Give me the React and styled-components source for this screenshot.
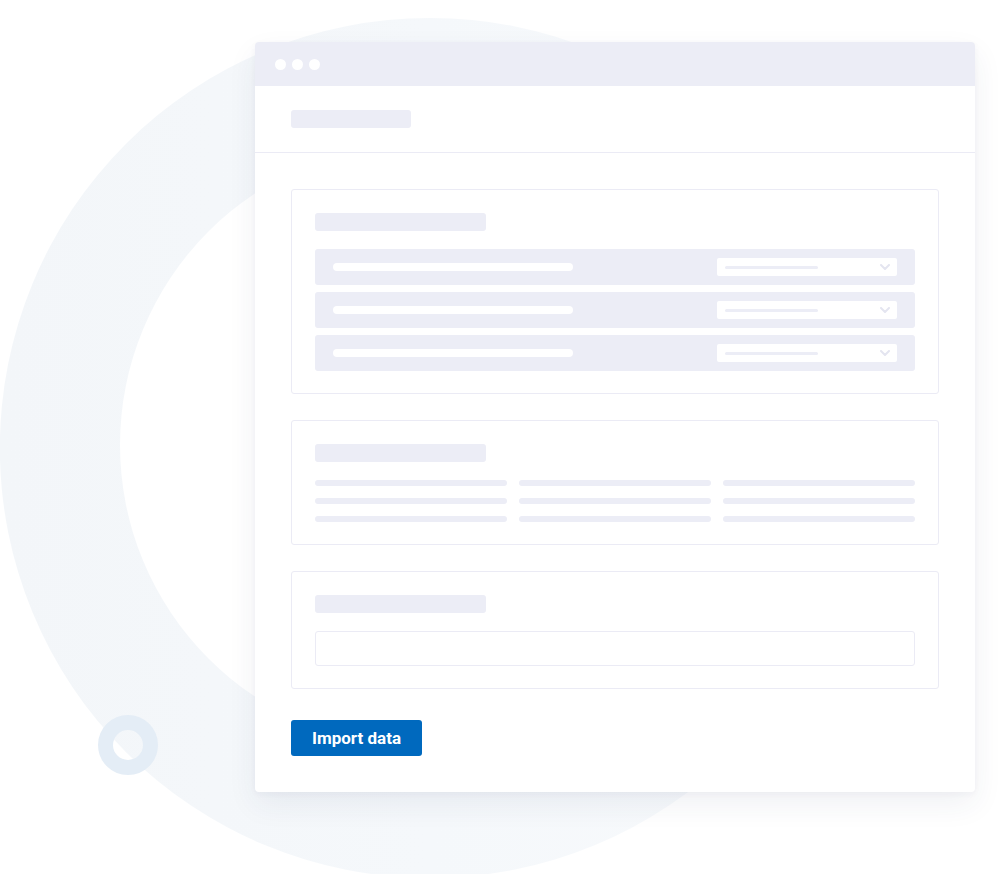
import React from "react";
import styled, { createGlobalStyle } from "styled-components";

const Global = createGlobalStyle`
  html, body { margin: 0; padding: 0; background: #ffffff; }
  body { font-family: Roboto, "Liberation Sans", sans-serif; }
  * { box-sizing: border-box; }
`;

const SKEL = "#ecedf6";
const LINE = "#ebebf5";

const Stage = styled.div`
  position: relative;
  width: 999px;
  height: 874px;
  overflow: hidden;
  padding: 42px 0 0 255px;
`;

const Backdrop = styled.svg`
  position: absolute;
  left: 0;
  top: 0;
  width: 999px;
  height: 874px;
  pointer-events: none;
`;

const Window = styled.div`
  position: relative;
  width: 720px;
  height: 750px;
  background: #ffffff;
  border-radius: 4px;
  box-shadow: 0 12px 30px rgba(40, 60, 100, 0.07), 0 2px 6px rgba(40, 60, 100, 0.04);
  display: flex;
  flex-direction: column;
`;

const TitleBar = styled.div`
  height: 44px;
  background: ${SKEL};
  border-radius: 4px 4px 0 0;
  display: flex;
  align-items: center;
  gap: 6px;
  padding-left: 20px;
`;

const Dot = styled.span`
  width: 11px;
  height: 11px;
  border-radius: 50%;
  background: #ffffff;
`;

const Header = styled.div`
  height: 67px;
  display: flex;
  align-items: center;
  padding: 0 36px;
  border-bottom: 1px solid ${LINE};
`;

const Skel = styled.div`
  width: ${(p) => p.$w}px;
  height: ${(p) => p.$h}px;
  background: ${(p) => p.$c || SKEL};
  border-radius: ${(p) => p.$r ?? 3}px;
  flex: none;
`;

const Body = styled.div`
  padding: 36px 36px 0 36px;
  display: flex;
  flex-direction: column;
  gap: 26px;
`;

const Card = styled.div`
  border: 1px solid ${LINE};
  border-radius: 3px;
  padding: 23px 23px 22px 23px;
  display: flex;
  flex-direction: column;
  gap: 18px;
`;

const Rows = styled.div`
  display: flex;
  flex-direction: column;
  gap: 7px;
`;

const Row = styled.div`
  height: 36px;
  background: ${SKEL};
  border-radius: 3px;
  display: flex;
  align-items: center;
  justify-content: space-between;
  padding: 0 18px;
`;

const Select = styled.div`
  width: 180px;
  height: 18px;
  background: #ffffff;
  border-radius: 2px;
  display: flex;
  align-items: center;
  justify-content: space-between;
  padding: 0 7px 0 8px;
`;

const Grid = styled.div`
  display: grid;
  grid-template-columns: repeat(3, 1fr);
  column-gap: 12px;
  row-gap: 12px;
`;

const GridLine = styled.div`
  height: 6px;
  background: ${SKEL};
  border-radius: 3px;
`;

const Input = styled.div`
  height: 35px;
  border: 1px solid ${LINE};
  border-radius: 3px;
`;

const Actions = styled.div`
  padding: 31px 36px 0 36px;
`;

const Button = styled.button`
  width: 131px;
  height: 36px;
  border: none;
  border-radius: 3px;
  background: #0069be;
  color: #ffffff;
  font-family: Roboto, "Liberation Sans", sans-serif;
  font-weight: 700;
  font-size: 17px;
  cursor: pointer;
  padding: 0;
`;

const Chevron = () => (
  <svg width="10" height="6" viewBox="0 0 10 6">
    <path d="M1 1 L5 5 L9 1" fill="none" stroke="#e4e5f0" strokeWidth="2" strokeLinecap="round" strokeLinejoin="round" />
  </svg>
);

const SelectRow = () => (
  <Row>
    <Skel $w={240} $h={8} $c="#ffffff" $r={4} />
    <Select>
      <Skel $w={93} $h={3} $r={2} />
      <Chevron />
    </Select>
  </Row>
);

export default function App() {
  return (
    <>
      <Global />
      <Stage>
        <Backdrop viewBox="0 0 999 874">
          <defs>
            <linearGradient id="ringGrad" x1="0" y1="0" x2="1" y2="0">
              <stop offset="0" stopColor="#f3f6f9" />
              <stop offset="0.5" stopColor="#f5f8fb" />
              <stop offset="1" stopColor="#f8fafc" />
            </linearGradient>
          </defs>
          <path
            fillRule="evenodd"
            fill="url(#ringGrad)"
            d="M430 18 A430 430 0 1 1 430 878 A430 430 0 1 1 430 18 Z M422 143 A302 302 0 1 0 422 747 A302 302 0 1 0 422 143 Z"
          />
          <circle cx="128" cy="745" r="22.5" fill="none" stroke="#e4edf6" strokeWidth="15" />
        </Backdrop>
        <Window>
          <TitleBar>
            <Dot />
            <Dot />
            <Dot />
          </TitleBar>
          <Header>
            <Skel $w={120} $h={18} />
          </Header>
          <Body>
            <Card>
              <Skel $w={171} $h={18} />
              <Rows>
                <SelectRow />
                <SelectRow />
                <SelectRow />
              </Rows>
            </Card>
            <Card>
              <Skel $w={171} $h={18} />
              <Grid>
                {Array.from({ length: 9 }).map((_, i) => (
                  <GridLine key={i} />
                ))}
              </Grid>
            </Card>
            <Card>
              <Skel $w={171} $h={18} />
              <Input />
            </Card>
          </Body>
          <Actions>
            <Button>Import data</Button>
          </Actions>
        </Window>
      </Stage>
    </>
  );
}
